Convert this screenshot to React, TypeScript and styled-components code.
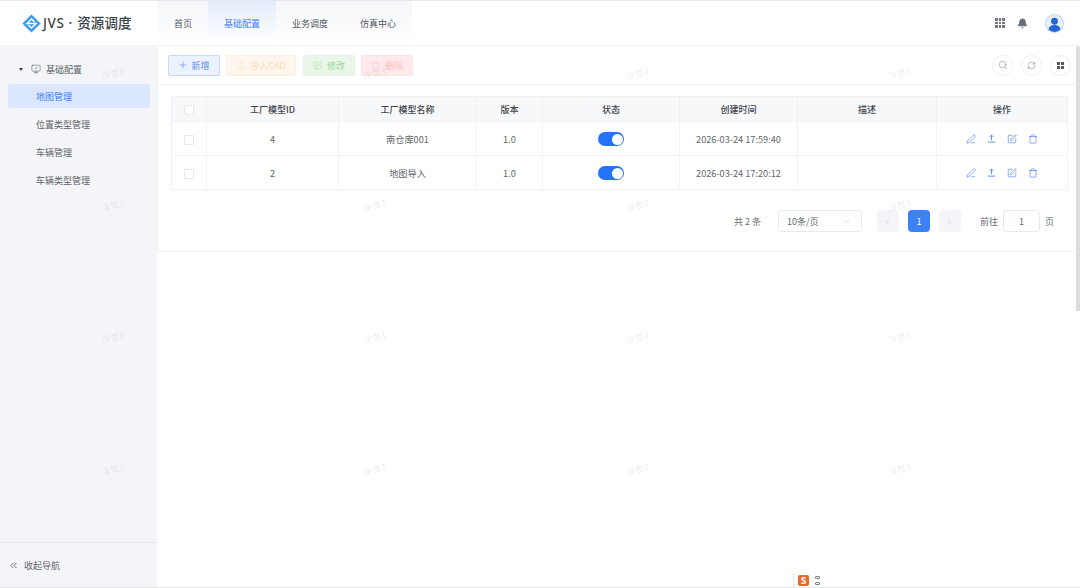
import React from "react";
import styled, { createGlobalStyle } from "styled-components";
import {
  Plus,
  Upload,
  SquarePen,
  Trash,
  Search,
  RefreshCw,
  ChevronDown,
  ChevronLeft,
  ChevronRight,
  ChevronsLeft,
  Bell,
  PenLine,
  MonitorCheck,
} from "lucide-react";

const GlobalStyle = createGlobalStyle`
  html, body {
    margin: 0;
    padding: 0;
    background: #ffffff;
    overflow: hidden;
  }
  body {
    font-family: "Noto Sans CJK SC", "Noto Sans", sans-serif;
    font-size: 9px;
    color: #5f6368;
  }
  * { box-sizing: border-box; }
`;

const Page = styled.div`
  position: relative;
  width: 1080px;
  height: 588px;
  display: flex;
  flex-direction: column;
  overflow: hidden;
  border-top: 1px solid #e6e7e9;
  border-bottom: 1px solid #e6e7e9;
`;

const Header = styled.header`
  height: 44px;
  flex: none;
  display: flex;
  align-items: stretch;
  background: #ffffff;
`;

const Brand = styled.div`
  width: 158px;
  flex: none;
  padding: 0 0 0 22px;
  display: flex;
  align-items: center;
  gap: 2px;
`;

const BrandName = styled.span`
  font-family: "Noto Sans", "Noto Sans CJK SC", sans-serif;
  font-size: 13.5px;
  line-height: 20px;
  font-weight: 500;
  letter-spacing: 0.1px;
  color: #3a3f47;
  white-space: nowrap;
`;

const BrandLatin = styled.span`
  letter-spacing: 0.6px;
`;

const BrandDot = styled.span`
  margin: 0 5px 0 4px;
`;

const Nav = styled.nav`
  display: flex;
  background: linear-gradient(180deg, #f4f6f9 0%, #ffffff 95%);
`;

const NavTab = styled.div<{ $active?: boolean; $w: number }>`
  width: ${(p) => p.$w}px;
  display: flex;
  align-items: center;
  justify-content: center;
  font-size: 9px;
  color: ${(p) => (p.$active ? "#3d7ff5" : "#4f545b")};
  background: ${(p) =>
    p.$active ? "linear-gradient(180deg, #e3ecfd 0%, #ffffff 95%)" : "transparent"};
`;

const HeaderRight = styled.div`
  margin-left: auto;
  display: flex;
  align-items: center;
  padding: 0 17px 0 0;
`;

const DotGrid = styled.div`
  display: grid;
  grid-template-columns: repeat(3, 2.6px);
  grid-auto-rows: 2.6px;
  gap: 1px;
  margin-right: 12px;
`;

const Dot = styled.i`
  display: block;
  background: #73777f;
`;

const Avatar = styled.div`
  width: 17px;
  height: 17px;
  margin-left: 18px;
  border-radius: 50%;
  background: #e6effc;
  box-shadow: 0 0 0 1px #c3d7f6;
  overflow: hidden;
  display: flex;
`;

const Body = styled.div`
  flex: 1;
  min-height: 0;
  display: flex;
`;

const Sidebar = styled.aside`
  width: 157px;
  flex: none;
  background: #f4f5f8;
  display: flex;
  flex-direction: column;
`;

const MenuArea = styled.div`
  flex: 1;
  padding: 9px 7px 0 8px;
`;

const MenuGroup = styled.div`
  height: 30px;
  display: flex;
  align-items: center;
  padding-left: 11px;
  font-size: 9px;
  color: #5a5f66;
`;

const Caret = styled.i`
  width: 0;
  height: 0;
  margin-right: 8px;
  border-left: 2.5px solid transparent;
  border-right: 2.5px solid transparent;
  border-top: 3.5px solid #3a3d42;
`;

const MenuItem = styled.div<{ $active?: boolean }>`
  height: 24px;
  margin-bottom: 4px;
  padding-left: 28px;
  display: flex;
  align-items: center;
  border-radius: 2px;
  font-size: 9px;
  color: ${(p) => (p.$active ? "#3d7ff5" : "#5f6368")};
  background: ${(p) => (p.$active ? "#dbe7fe" : "transparent")};
`;

const Collapse = styled.div`
  height: 45px;
  flex: none;
  border-top: 1px solid #e6e7ea;
  display: flex;
  align-items: center;
  gap: 5px;
  padding: 0 0 0 8px;
  font-size: 9px;
  color: #5f6368;
`;

const Main = styled.main`
  flex: 1;
  min-width: 0;
  display: flex;
  flex-direction: column;
`;

const Panel = styled.section`
  border-top: 1px solid #eff0f2;
  border-left: 1px solid #f1f2f4;
  border-bottom: 1px solid #eff0f2;
  height: 207px;
`;

const Toolbar = styled.div`
  height: 39px;
  display: flex;
  align-items: center;
  padding: 0 9px 0 10px;
  border-bottom: 1px solid #f0f1f3;
`;

const Btn = styled.div<{ $bg: string; $fg: string; $line: string; $w: number; $mr: number; $gap?: number }>`
  width: ${(p) => p.$w}px;
  height: 21px;
  margin-right: ${(p) => p.$mr}px;
  display: flex;
  align-items: center;
  justify-content: center;
  gap: ${(p) => p.$gap ?? 5}px;
  border-radius: 2px;
  font-size: 9px;
  background: ${(p) => p.$bg};
  color: ${(p) => p.$fg};
  border: 1px solid ${(p) => p.$line};
`;

const RoundTools = styled.div`
  margin-left: auto;
  display: flex;
  gap: 8px;
`;

const RoundBtn = styled.div`
  width: 21px;
  height: 21px;
  border-radius: 50%;
  border: 1px solid #eceef0;
  display: flex;
  align-items: center;
  justify-content: center;
  color: #7b7f85;
`;

const TilesIcon = styled.div`
  display: grid;
  grid-template-columns: repeat(2, 3px);
  grid-auto-rows: 3px;
  gap: 1px;
`;

const Tile = styled.i`
  display: block;
  background: #55595f;
`;

const TableWrap = styled.div`
  margin: 11px 12px 0 13px;
`;

const Table = styled.table`
  width: 896px;
  table-layout: fixed;
  border-collapse: collapse;
  border: 1px solid #eef0f4;
  font-size: 9.2px;
`;

const Th = styled.th`
  height: 25px;
  padding: 0;
  font-weight: 500;
  font-size: 9px;
  color: #41454b;
  background: #f7f8fa;
  border-right: 1px solid #eef0f4;
  text-align: center;
`;

const Td = styled.td`
  height: 34px;
  padding: 0;
  color: #62666c;
  border-top: 1px solid #f1f3f6;
  border-right: 1px solid #f1f3f6;
  text-align: center;
`;

const Check = styled.span`
  display: inline-block;
  width: 10px;
  height: 10px;
  vertical-align: middle;
  border: 1px solid #e6e8ec;
  border-radius: 1px;
  background: #ffffff;
`;

const Toggle = styled.span`
  display: inline-flex;
  justify-content: flex-end;
  align-items: center;
  width: 26px;
  height: 14px;
  padding-right: 1.5px;
  vertical-align: middle;
  border-radius: 7px;
  background: #2672f6;
`;

const Knob = styled.i`
  width: 11px;
  height: 11px;
  border-radius: 50%;
  background: #ffffff;
`;

const Actions = styled.div`
  display: flex;
  justify-content: center;
  gap: 11px;
  color: #5288f4;
`;

const Pager = styled.div`
  height: 22px;
  margin: 20px 26px 0 0;
  display: flex;
  align-items: center;
  justify-content: flex-end;
  font-size: 9px;
  color: #6a6e74;
`;

const PerPage = styled.div`
  width: 84px;
  height: 22px;
  margin: 0 15px 0 17px;
  padding: 0 8px;
  display: flex;
  align-items: center;
  justify-content: space-between;
  border: 1px solid #e8e9ec;
  border-radius: 3px;
  color: #62666c;
`;

const PageBtn = styled.div<{ $active?: boolean }>`
  width: 22px;
  height: 22px;
  margin-right: 9px;
  display: flex;
  align-items: center;
  justify-content: center;
  border-radius: 4px;
  font-size: 9px;
  background: ${(p) => (p.$active ? "#3d81f6" : "#f4f5f8")};
  color: ${(p) => (p.$active ? "#ffffff" : "#c0c4cc")};
`;

const JumpLabel = styled.span`
  margin-left: 10px;
`;

const JumpInput = styled.div`
  width: 37px;
  height: 22px;
  margin: 0 5px;
  display: flex;
  align-items: center;
  justify-content: center;
  border: 1px solid #e8e9ec;
  border-radius: 3px;
  color: #62666c;
`;

const ScrollThumb = styled.div`
  position: absolute;
  right: 0;
  top: 45px;
  width: 4px;
  height: 265px;
  background: #dcdde0;
  border-radius: 2px 2px 0 0;
`;

const Watermarks = styled.div`
  position: absolute;
  left: 111px;
  top: 67px;
  display: grid;
  grid-template-columns: repeat(4, 262.4px);
  grid-auto-rows: 132px;
  pointer-events: none;
`;

const Mark = styled.span`
  width: 26px;
  text-align: center;
  transform: translateX(-13px) rotate(-15deg);
  transform-origin: center top;
  font-size: 9px;
  line-height: 12px;
  color: rgba(120, 124, 132, 0.15);
  white-space: nowrap;
`;

const ImeTray = styled.div`
  position: absolute;
  left: 793px;
  bottom: 0;
  height: 13px;
  padding-left: 4px;
  display: flex;
  align-items: center;
  gap: 6px;
  border-left: 1px dotted #d6d6d6;
`;

const ImeLogo = styled.div`
  width: 11px;
  height: 11px;
  border-radius: 2px;
  background: #f2632c;
  color: #ffffff;
  font-size: 9px;
  font-weight: 700;
  line-height: 11px;
  text-align: center;
`;

const ImeDots = styled.div`
  display: flex;
  flex-direction: column;
  gap: 3px;
`;

const ImeDot = styled.i`
  display: block;
  width: 5px;
  height: 3px;
  border: 1px solid #7a7f86;
  border-radius: 1px;
`;

const rows = [
  { id: "4", name: "南仓库001", version: "1.0", time: "2026-03-24 17:59:40" },
  { id: "2", name: "地图导入", version: "1.0", time: "2026-03-24 17:20:12" },
];

const colWidths = [35, 132, 138, 66, 137, 118, 139, 131];
const headers = ["工厂模型ID", "工厂模型名称", "版本", "状态", "创建时间", "描述", "操作"];

const Logo = () => (
  <svg width="19" height="19" viewBox="0 0 20 20">
    <path d="M10 0.6 L19.6 10 L10 19.4 L0.4 10 Z" fill="#3d97f3" />
    <path
      d="M13.4 8.4 L10 5.2 L5.2 10 H14.8 L10 14.8 L6.6 11.6"
      fill="none"
      stroke="#ffffff"
      strokeWidth="1.5"
    />
  </svg>
);

const UserGlyph = () => (
  <svg width="17" height="17" viewBox="0 0 18 18">
    <circle cx="9" cy="6.6" r="3.6" fill="#2367d8" />
    <path d="M2.6 16 C3 11.6 6 10.6 9 10.6 C12 10.6 15 11.6 15.4 16 L15 18 L3 18 Z" fill="#2367d8" />
  </svg>
);

const UploadLine = () => (
  <svg width="9" height="9" viewBox="0 0 10 10" fill="none" stroke="currentColor" strokeWidth="1">
    <path d="M5 7 V1.4 M2.6 3.6 L5 1.2 L7.4 3.6 M0.8 9 H9.2" />
  </svg>
);

export default function App() {
  return (
    <Page>
      <GlobalStyle />
      <Header>
        <Brand>
          <Logo />
          <BrandName>
            <BrandLatin>JVS</BrandLatin>
            <BrandDot>·</BrandDot>资源调度
          </BrandName>
        </Brand>
        <Nav>
          <NavTab $w={50}>首页</NavTab>
          <NavTab $w={68} $active>
            基础配置
          </NavTab>
          <NavTab $w={68}>业务调度</NavTab>
          <NavTab $w={68}>仿真中心</NavTab>
        </Nav>
        <HeaderRight>
          <DotGrid>
            {Array.from({ length: 9 }).map((_, i) => (
              <Dot key={i} />
            ))}
          </DotGrid>
          <Bell size={11} fill="#676c78" color="#676c78" />
          <Avatar>
            <UserGlyph />
          </Avatar>
        </HeaderRight>
      </Header>
      <Body>
        <Sidebar>
          <MenuArea>
            <MenuGroup>
              <Caret />
              <MonitorCheck size={10} strokeWidth={1.4} color="#5a5f66" style={{ marginRight: 5 }} />
              基础配置
            </MenuGroup>
            <MenuItem $active>地图管理</MenuItem>
            <MenuItem>位置类型管理</MenuItem>
            <MenuItem>车辆管理</MenuItem>
            <MenuItem>车辆类型管理</MenuItem>
          </MenuArea>
          <Collapse>
            <ChevronsLeft size={11} strokeWidth={1.9} color="#5f6368" />
            收起导航
          </Collapse>
        </Sidebar>
        <Main>
          <Panel>
            <Toolbar>
              <Btn $w={52} $mr={6} $gap={3} $bg="#ebf2fe" $fg="#5f8ff0" $line="#c5d9fb">
                <Plus size={10} strokeWidth={1.5} />
                新增
              </Btn>
              <Btn $w={70} $mr={7} $bg="#fef6ec" $fg="#fbdcb4" $line="#fef0df">
                <Upload size={9} strokeWidth={1.4} />
                导入CAD
              </Btn>
              <Btn $w={52} $mr={6} $bg="#eaf7e8" $fg="#9ed79a" $line="#e5f5e3">
                <SquarePen size={9} strokeWidth={1.4} />
                修改
              </Btn>
              <Btn $w={52} $mr={0} $bg="#ffe9ea" $fg="#fdc0c2" $line="#ffe4e5">
                <Trash size={9} strokeWidth={1.4} />
                删除
              </Btn>
              <RoundTools>
                <RoundBtn>
                  <Search size={10} strokeWidth={1.2} />
                </RoundBtn>
                <RoundBtn>
                  <RefreshCw size={9} strokeWidth={1.3} />
                </RoundBtn>
                <RoundBtn>
                  <TilesIcon>
                    <Tile />
                    <Tile />
                    <Tile />
                    <Tile />
                  </TilesIcon>
                </RoundBtn>
              </RoundTools>
            </Toolbar>
            <TableWrap>
              <Table>
                <colgroup>
                  {colWidths.map((w, i) => (
                    <col key={i} width={w} />
                  ))}
                </colgroup>
                <thead>
                  <tr>
                    <Th>
                      <Check />
                    </Th>
                    {headers.map((h) => (
                      <Th key={h}>{h}</Th>
                    ))}
                  </tr>
                </thead>
                <tbody>
                  {rows.map((r) => (
                    <tr key={r.id}>
                      <Td>
                        <Check />
                      </Td>
                      <Td>{r.id}</Td>
                      <Td>{r.name}</Td>
                      <Td>{r.version}</Td>
                      <Td>
                        <Toggle>
                          <Knob />
                        </Toggle>
                      </Td>
                      <Td>{r.time}</Td>
                      <Td />
                      <Td>
                        <Actions>
                          <PenLine size={10} strokeWidth={1.6} />
                          <UploadLine />
                          <SquarePen size={10} strokeWidth={1.6} />
                          <Trash size={10} strokeWidth={1.6} />
                        </Actions>
                      </Td>
                    </tr>
                  ))}
                </tbody>
              </Table>
            </TableWrap>
            <Pager>
              <span>共 2 条</span>
              <PerPage>
                <span>10条/页</span>
                <ChevronDown size={11} strokeWidth={1} color="#b4b8bf" />
              </PerPage>
              <PageBtn>
                <ChevronLeft size={9} strokeWidth={1.2} />
              </PageBtn>
              <PageBtn $active>1</PageBtn>
              <PageBtn>
                <ChevronRight size={9} strokeWidth={1.2} />
              </PageBtn>
              <JumpLabel>前往</JumpLabel>
              <JumpInput>1</JumpInput>
              <span>页</span>
            </Pager>
          </Panel>
        </Main>
      </Body>
      <ScrollThumb />
      <Watermarks>
        {Array.from({ length: 16 }).map((_, i) => (
          <Mark key={i}>浮世3</Mark>
        ))}
      </Watermarks>
      <ImeTray>
        <ImeLogo>S</ImeLogo>
        <ImeDots>
          <ImeDot />
          <ImeDot />
        </ImeDots>
      </ImeTray>
    </Page>
  );
}
